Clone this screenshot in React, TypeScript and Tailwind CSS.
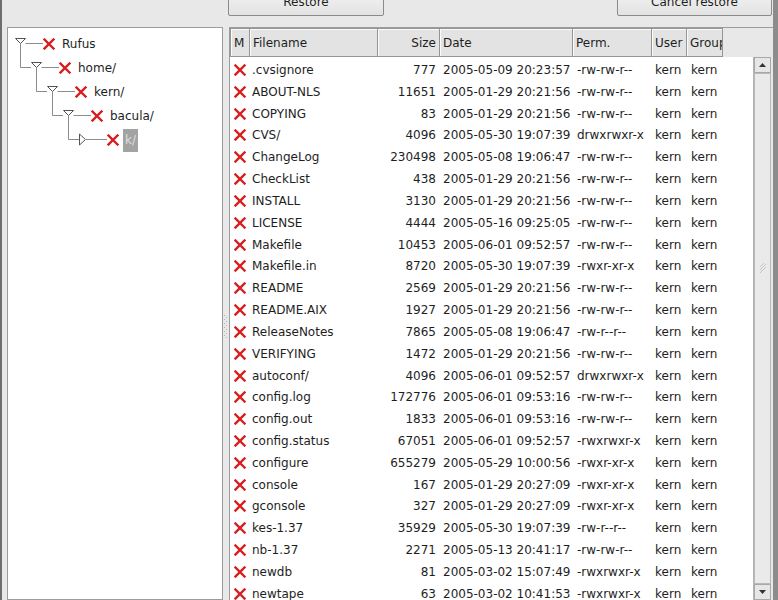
import React from 'react';

const files: [string, string, string, string][] = [
    ['.cvsignore', '777', '2005-05-09 20:23:57', '-rw-rw-r--'],
    ['ABOUT-NLS', '11651', '2005-01-29 20:21:56', '-rw-rw-r--'],
    ['COPYING', '83', '2005-01-29 20:21:56', '-rw-rw-r--'],
    ['CVS/', '4096', '2005-05-30 19:07:39', 'drwxrwxr-x'],
    ['ChangeLog', '230498', '2005-05-08 19:06:47', '-rw-rw-r--'],
    ['CheckList', '438', '2005-01-29 20:21:56', '-rw-rw-r--'],
    ['INSTALL', '3130', '2005-01-29 20:21:56', '-rw-rw-r--'],
    ['LICENSE', '4444', '2005-05-16 09:25:05', '-rw-rw-r--'],
    ['Makefile', '10453', '2005-06-01 09:52:57', '-rw-rw-r--'],
    ['Makefile.in', '8720', '2005-05-30 19:07:39', '-rwxr-xr-x'],
    ['README', '2569', '2005-01-29 20:21:56', '-rw-rw-r--'],
    ['README.AIX', '1927', '2005-01-29 20:21:56', '-rw-rw-r--'],
    ['ReleaseNotes', '7865', '2005-05-08 19:06:47', '-rw-r--r--'],
    ['VERIFYING', '1472', '2005-01-29 20:21:56', '-rw-rw-r--'],
    ['autoconf/', '4096', '2005-06-01 09:52:57', 'drwxrwxr-x'],
    ['config.log', '172776', '2005-06-01 09:53:16', '-rw-rw-r--'],
    ['config.out', '1833', '2005-06-01 09:53:16', '-rw-rw-r--'],
    ['config.status', '67051', '2005-06-01 09:52:57', '-rwxrwxr-x'],
    ['configure', '655279', '2005-05-29 10:00:56', '-rwxr-xr-x'],
    ['console', '167', '2005-01-29 20:27:09', '-rwxr-xr-x'],
    ['gconsole', '327', '2005-01-29 20:27:09', '-rwxr-xr-x'],
    ['kes-1.37', '35929', '2005-05-30 19:07:39', '-rw-r--r--'],
    ['nb-1.37', '2271', '2005-05-13 20:41:17', '-rw-rw-r--'],
    ['newdb', '81', '2005-03-02 15:07:49', '-rwxrwxr-x'],
    ['newtape', '63', '2005-03-02 10:41:53', '-rwxrwxr-x'],
];

const cols = 'grid grid-cols-[20px_128px_62px_133px_79px_35px_36px]';
const indents = ['w-0', 'w-4', 'w-8', 'w-12'];

function RedX() {
    return (
        <svg width="12" height="12" viewBox="0 0 12 12" className="shrink-0">
            <path d="M1.5 1.5 L10.5 10.5 M10.5 1.5 L1.5 10.5" stroke="#d81e1e" strokeWidth="2.4" strokeLinecap="square" />
        </svg>
    );
}

function TreeNode({ level, label, open, selected }: { level: number, label: string, open?: boolean, selected?: boolean }) {
    return (
        <div className="flex h-6 items-center">
            {level > 0 && <div className={indents[level - 1] + ' shrink-0'} />}
            {level > 0 && (
                <svg width="16" height="24" className="shrink-0">
                    <path d="M5.5 0 V11.5 H16" stroke="#8c8c8c" fill="none" />
                </svg>
            )}
            <svg width="28" height="24" className="shrink-0">
                {open ? (
                    <>
                        <polygon points="0.5,6.5 10.5,6.5 5.5,11.5" fill="#fff" stroke="#555" />
                        <path d="M10.5 11.5 H28 M5.5 12 V24" stroke="#8c8c8c" fill="none" />
                    </>
                ) : (
                    <>
                        <polygon points="0.5,6 0.5,17 6.5,11.5" fill="#fff" stroke="#555" />
                        <path d="M6.5 11.5 H28" stroke="#8c8c8c" fill="none" />
                    </>
                )}
            </svg>
            <RedX />
            {selected ? (
                <span className="ml-[4px] h-[23px] px-[2px] flex items-center bg-[#a3a3a3] text-[#dedede]">{label}</span>
            ) : (
                <span className="ml-[7px]">{label}</span>
            )}
        </div>
    );
}

function HeaderCell({ label, right, first }: { label: string, right?: boolean, first?: boolean }) {
    return (
        <div
            className={
                'h-[29px] flex items-center overflow-hidden whitespace-nowrap bg-[#e3e3e3] border-y border-r border-[#959595] shadow-[inset_1px_1px_0_#fbfbfb] ' +
                (first ? 'border-l ' : '') +
                (right ? 'justify-end pr-[3px]' : 'pl-[3px]')
            }
        >
            {label}
        </div>
    );
}

export default function App() {
    return (
        <div
            className="w-[778px] h-[600px] overflow-hidden flex flex-col bg-[#e8e8e8] border-l-2 border-r-[5px] border-l-[#6e6e6e] border-r-[#8c8c8c] text-[12px] text-[#1e1e1e]"
            style={{ fontFamily: '"DejaVu Sans", sans-serif' }}
        >
            <div className="h-[27px] shrink-0">
                <div className="h-[16px] flex items-end overflow-hidden">
                    <button className="ml-[226px] w-[156px] h-[30px] shrink-0 pt-[2px] border border-[#8a8a8a] rounded-[2px] bg-gradient-to-b from-[#f7f7f7] to-[#e2e2e2]">
                        Restore
                    </button>
                    <button className="ml-[233px] w-[155px] h-[30px] shrink-0 pt-[2px] border border-[#8a8a8a] rounded-[2px] bg-gradient-to-b from-[#f7f7f7] to-[#e2e2e2]">
                        Cancel restore
                    </button>
                </div>
            </div>

            <div className="flex flex-1 min-h-0">
                <div className="ml-[5px] w-[216px] shrink-0 bg-white border border-[#9c9c9c] pl-[7px] pt-[4px]">
                    <TreeNode level={0} label="Rufus" open />
                    <TreeNode level={1} label="home/" open />
                    <TreeNode level={2} label="kern/" open />
                    <TreeNode level={3} label="bacula/" open />
                    <TreeNode level={4} label="k/" selected />
                </div>

                <div className="w-[6px] shrink-0 flex items-center justify-center">
                    <svg width="4" height="24" className="mt-[26px]">
                        {[0, 4, 8, 12, 16, 20].map((y) => (
                            <g key={y}>
                                <rect x="0" y={y} width="1" height="1" fill="#b0b0b0" />
                                <rect x="2" y={y + 2} width="1" height="1" fill="#b0b0b0" />
                            </g>
                        ))}
                    </svg>
                </div>

                <div className="flex-1 flex flex-col min-w-0 border-l border-t border-[#9c9c9c]">
                    <div className={cols + ' shrink-0'}>
                        <HeaderCell label="M" first />
                        <HeaderCell label="Filename" />
                        <HeaderCell label="Size" right />
                        <HeaderCell label="Date" />
                        <HeaderCell label="Perm." />
                        <HeaderCell label="User" />
                        <HeaderCell label="Group" />
                    </div>
                    <div className="flex flex-1 min-h-0">
                        <div className="w-[523px] shrink-0 bg-white pt-[2px]">
                            {files.map(([name, size, date, perm]) => (
                                <div key={name} className={cols + ' h-[21.83px] items-center whitespace-nowrap'}>
                                    <div className="pl-[4px] flex items-center">
                                        <RedX />
                                    </div>
                                    <div className="pl-[2px] overflow-hidden">{name}</div>
                                    <div className="pr-[4px] text-right">{size}</div>
                                    <div className="pl-[3px]">{date}</div>
                                    <div className="pl-[4px]">{perm}</div>
                                    <div className="pl-[3px]">kern</div>
                                    <div className="pl-[4px]">kern</div>
                                </div>
                            ))}
                        </div>
                        <div className="w-[18px] shrink-0 flex flex-col bg-[#d2d2d2] border-l border-[#b4b4b4]">
                            <div className="h-[16px] shrink-0 flex items-center justify-center bg-[#e6e6e6] border border-[#a8a8a8]">
                                <svg width="7" height="4"><polygon points="0,4 7,4 3.5,0" fill="#333" /></svg>
                            </div>
                            <div className="flex-1 bg-[#eaeaea] border border-[#b8b8b8] flex flex-col items-center pt-[188px]">
                                <svg width="8" height="12">
                                    <path d="M1 11 L7 5 M1 8 L7 2 M1 5 L5 1" stroke="#c4c4c4" />
                                </svg>
                            </div>
                            <div className="h-[16px] shrink-0 flex items-center justify-center bg-[#e6e6e6] border border-[#a8a8a8]">
                                <svg width="7" height="4"><polygon points="0,0 7,0 3.5,4" fill="#333" /></svg>
                            </div>
                        </div>
                    </div>
                </div>
            </div>
        </div>
    );
}
